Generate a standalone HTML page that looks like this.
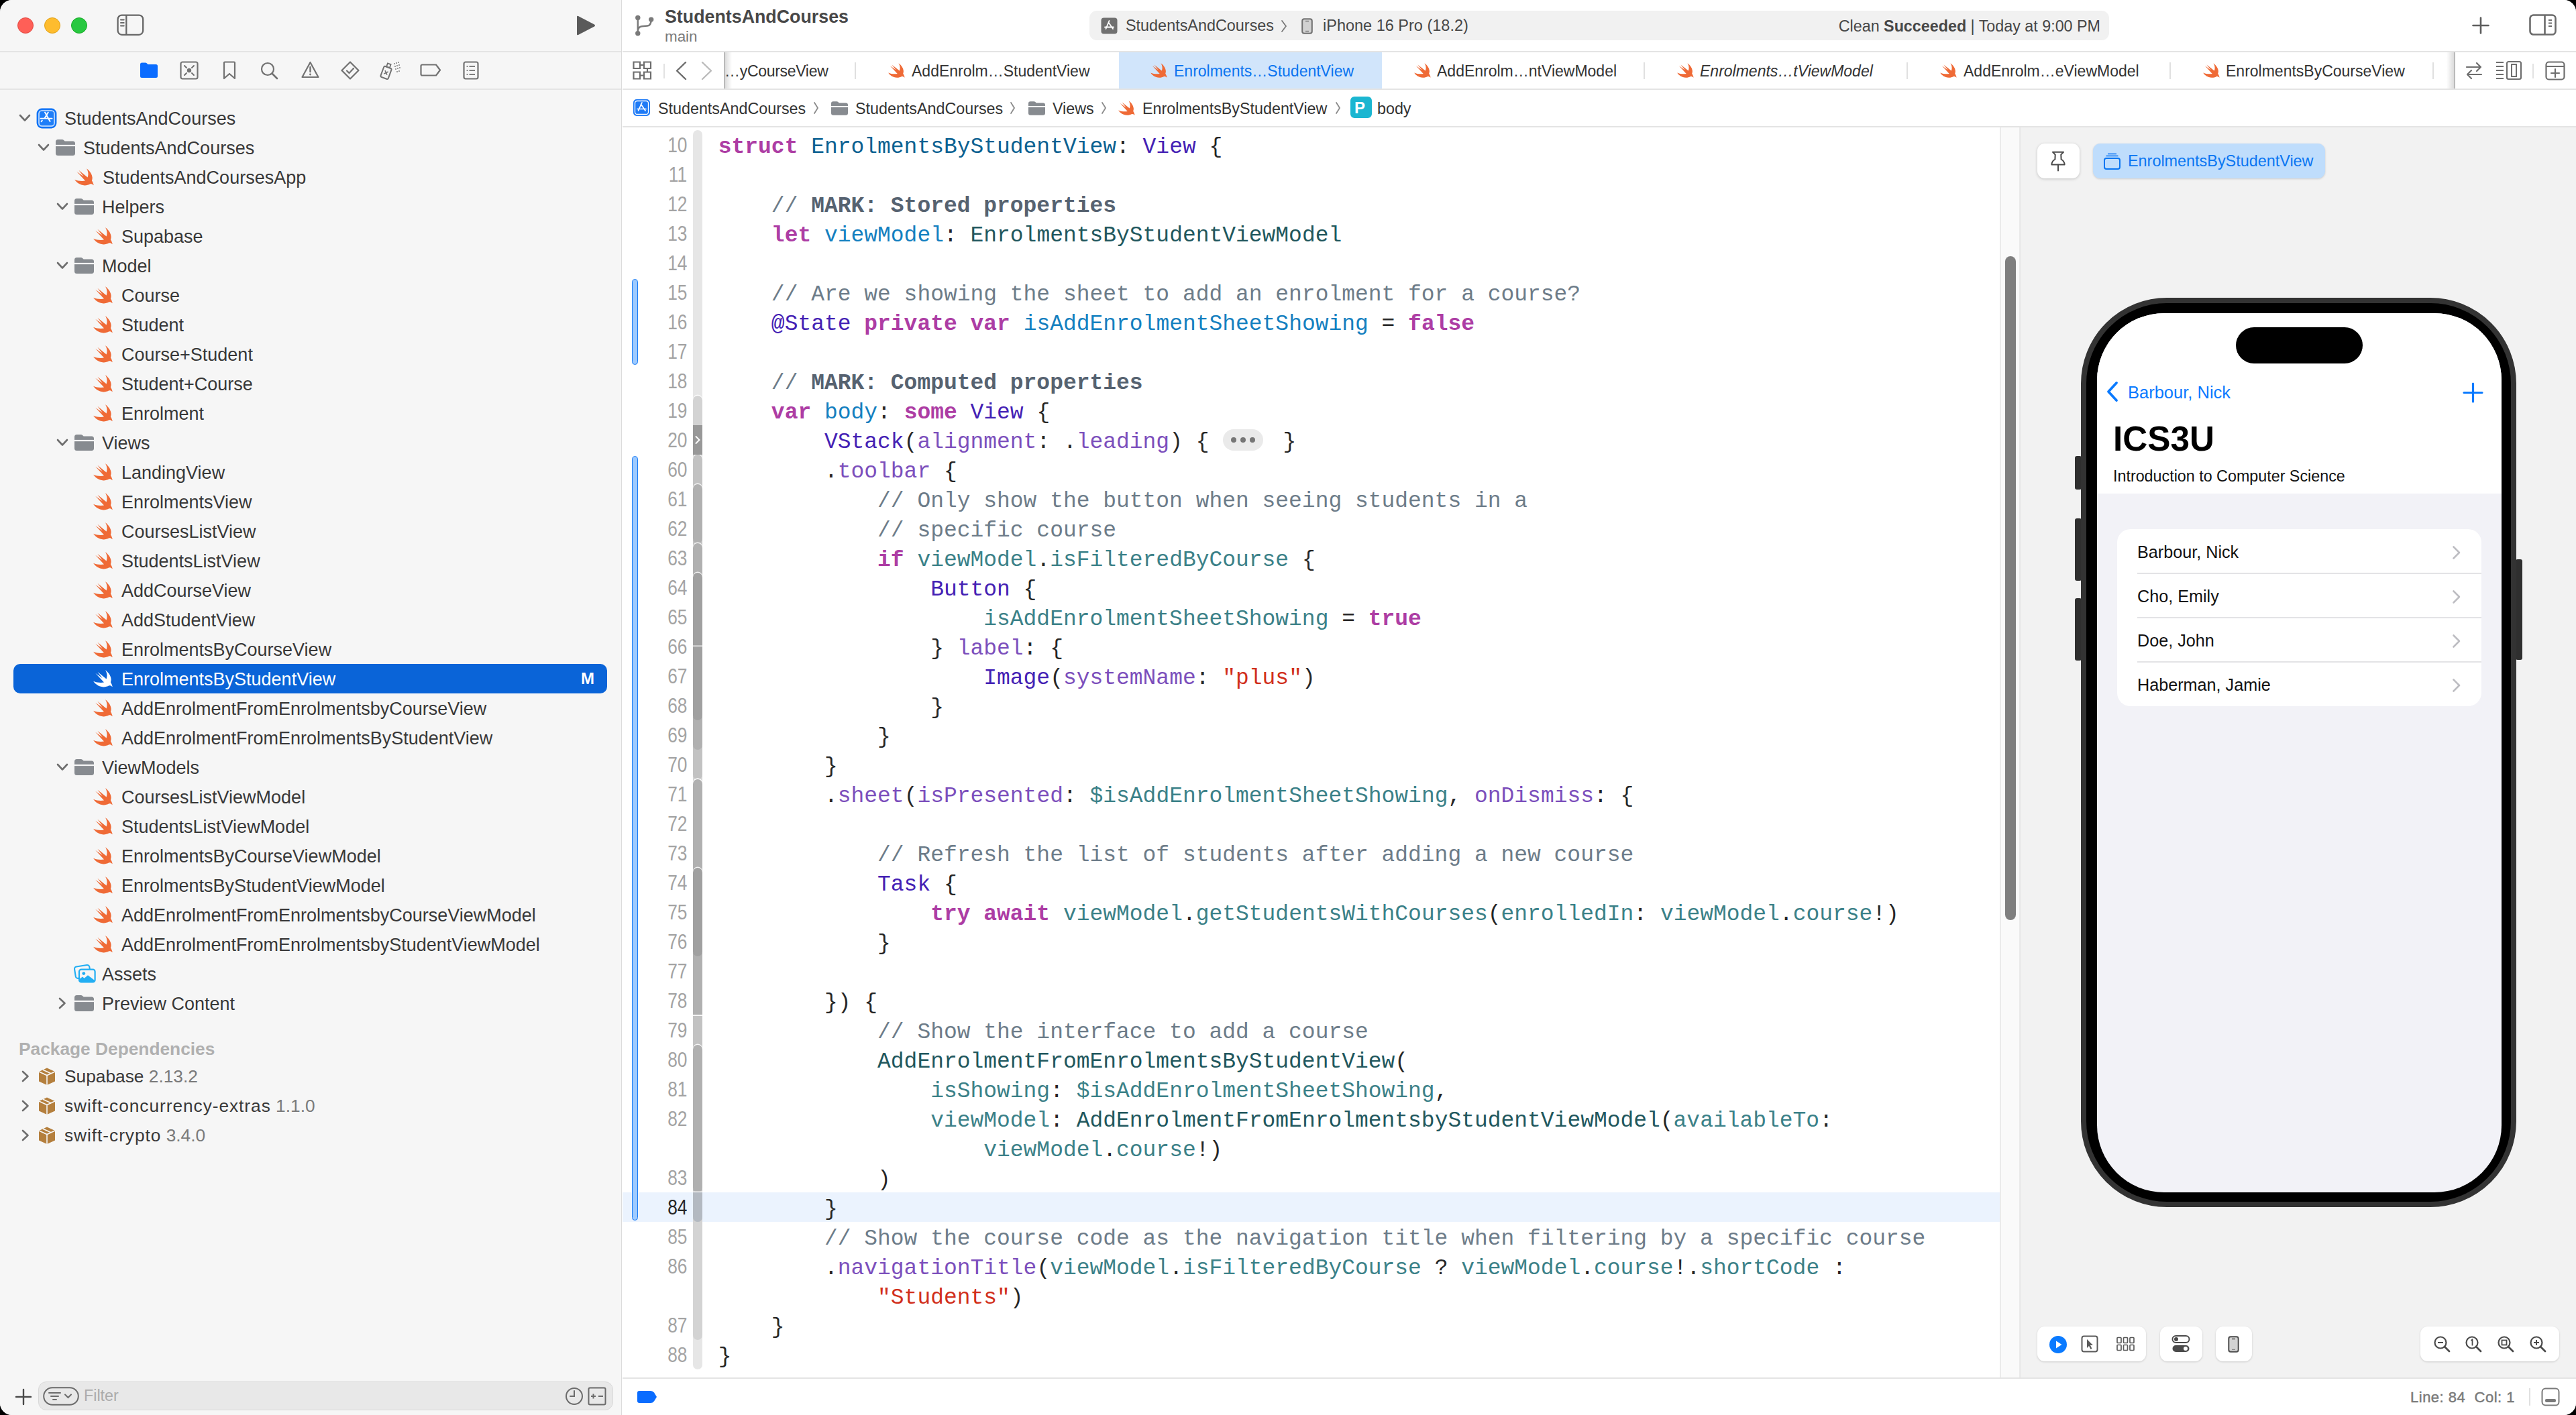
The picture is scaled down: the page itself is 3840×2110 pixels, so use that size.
<!DOCTYPE html><html><head><meta charset="utf-8"><title>Xcode</title><style>
*{margin:0;padding:0;box-sizing:border-box}
html,body{width:3840px;height:2110px;overflow:hidden;background:#000}
body{position:relative;font-family:"Liberation Sans",sans-serif}
#win{position:absolute;left:0;top:0;width:3840px;height:2110px;border-radius:18px;overflow:hidden;background:#fff}
#win div,#win svg{position:absolute}
.t{white-space:pre}
.m{font-family:"Liberation Mono",monospace;font-size:32.96px;line-height:44px;white-space:pre;color:#262626}
.k{color:#AD3DA4;font-weight:700}
.c{color:#6D7C89}
.mk{color:#566270;font-weight:700}
.s{color:#D12F1B}
.td{color:#0B6191}
.od{color:#1480C0}
.pc{color:#21575D}
.pf{color:#3B8188}
.oc{color:#4421B4}
.of{color:#7C4FBC}
</style></head><body><div id="win">
<div style="left:0px;top:0px;width:926px;height:2110px;background:#F6F6F6"></div>
<div style="left:926px;top:0px;width:1px;height:2110px;background:#DCDCDC"></div>
<div style="left:0px;top:76px;width:926px;height:2px;background:#E4E4E4"></div>
<div style="left:0px;top:132px;width:926px;height:2px;background:#E4E4E4"></div>
<div style="left:26px;top:26px;width:24px;height:24px;background:#FF5F57;border:1px solid #E2463F;border-radius:50%"></div>
<div style="left:66px;top:26px;width:24px;height:24px;background:#FEBC2E;border:1px solid #E1A116;border-radius:50%"></div>
<div style="left:106px;top:26px;width:24px;height:24px;background:#28C840;border:1px solid #1AAB29;border-radius:50%"></div>
<svg style="left:173px;top:20px;" width="42" height="34" viewBox="0 0 42 34"><rect x="2.6" y="2.6" width="37.6" height="29.2" rx="6" fill="none" stroke="#676767" stroke-width="2.3"/><line x1="15.3" y1="2" x2="15.3" y2="32" stroke="#676767" stroke-width="2.3"/><line x1="7" y1="9.5" x2="11.7" y2="9.5" stroke="#676767" stroke-width="2" stroke-linecap="round"/><line x1="7" y1="14" x2="11.7" y2="14" stroke="#676767" stroke-width="2" stroke-linecap="round"/><line x1="7" y1="18.5" x2="11.7" y2="18.5" stroke="#676767" stroke-width="2" stroke-linecap="round"/></svg>
<svg style="left:857px;top:22px;" width="32" height="32" viewBox="0 0 32 32"><path d="M3 3 Q3 1 5 2 L29 14.5 Q31 16 29 17.5 L5 30 Q3 31 3 29 Z" fill="#5A5A5A"/></svg>
<svg style="left:208px;top:92px;" width="28" height="25" viewBox="0 0 28 25"><path d="M1 4 Q1 1.5 3.5 1.5 L9 1.5 Q10.5 1.5 11.5 3 L12.5 4 L24.5 4 Q27 4 27 6.5 L27 21.5 Q27 24 24.5 24 L3.5 24 Q1 24 1 21.5 Z" fill="#0A6CFF"/></svg>
<svg style="left:268px;top:91px;" width="28" height="28" viewBox="0 0 28 28"><rect x="1.5" y="1.5" width="25" height="25" rx="2.5" fill="none" stroke="#727272" stroke-width="2.2"/><circle cx="14" cy="14" r="3.2" fill="#727272"/><path d="M7 7 L10 10 M21 7 L18 10 M7 21 L10 18 M21 21 L18 18" stroke="#727272" stroke-width="2" stroke-linecap="round"/></svg>
<svg style="left:332px;top:91px;" width="20" height="28" viewBox="0 0 20 28"><path d="M2 2.5 Q2 1.5 3 1.5 L17 1.5 Q18 1.5 18 2.5 L18 26 L10 19 L2 26 Z" fill="none" stroke="#727272" stroke-width="2.2" stroke-linejoin="round"/></svg>
<svg style="left:388px;top:92px;" width="28" height="27" viewBox="0 0 28 27"><circle cx="11" cy="11" r="9" fill="none" stroke="#727272" stroke-width="2.2"/><line x1="17.5" y1="17.5" x2="25" y2="25" stroke="#727272" stroke-width="2.6" stroke-linecap="round"/></svg>
<svg style="left:449px;top:91px;" width="27" height="26" viewBox="0 0 27 26"><path d="M13.5 2 L25.5 24 L1.5 24 Z" fill="none" stroke="#727272" stroke-width="2.2" stroke-linejoin="round"/><line x1="13.5" y1="9" x2="13.5" y2="16" stroke="#727272" stroke-width="2.4" stroke-linecap="round"/><circle cx="13.5" cy="20" r="1.4" fill="#727272"/></svg>
<svg style="left:508px;top:91px;" width="28" height="28" viewBox="0 0 28 28"><path d="M14 1.5 L26.5 14 L14 26.5 L1.5 14 Z" fill="none" stroke="#727272" stroke-width="2.2" stroke-linejoin="round"/><path d="M9 14.5 L12.5 18 L19 11" fill="none" stroke="#727272" stroke-width="2.2" stroke-linecap="round"/></svg>
<svg style="left:566px;top:91px;" width="33" height="28" viewBox="0 0 33 28"><g transform="rotate(20 10 16)"><rect x="4" y="9" width="12" height="17" rx="2" fill="none" stroke="#727272" stroke-width="2"/><rect x="7.5" y="3.5" width="5" height="5.5" fill="none" stroke="#727272" stroke-width="1.8"/><path d="M7.5 15 L12.5 20 M12.5 15 L7.5 20" stroke="#727272" stroke-width="1.6"/></g><circle cx="22" cy="4" r="0.9" fill="#727272"/><circle cx="25" cy="3" r="0.9" fill="#727272"/><circle cx="28" cy="2" r="0.9" fill="#727272"/><circle cx="23" cy="8" r="0.9" fill="#727272"/><circle cx="26" cy="7" r="0.9" fill="#727272"/><circle cx="29" cy="6" r="0.9" fill="#727272"/><circle cx="24" cy="12" r="0.9" fill="#727272"/><circle cx="27" cy="11" r="0.9" fill="#727272"/><circle cx="30" cy="10" r="0.9" fill="#727272"/><circle cx="26" cy="16" r="0.9" fill="#727272"/><circle cx="29" cy="15" r="0.9" fill="#727272"/></svg>
<svg style="left:626px;top:95px;" width="32" height="19" viewBox="0 0 32 19"><path d="M3.5 1.5 L24 1.5 L30 9.5 L24 17.5 L3.5 17.5 Q1.5 17.5 1.5 15.5 L1.5 3.5 Q1.5 1.5 3.5 1.5 Z" fill="none" stroke="#727272" stroke-width="2.2" stroke-linejoin="round"/></svg>
<svg style="left:690px;top:91px;" width="24" height="28" viewBox="0 0 24 28"><rect x="1.5" y="1.5" width="21" height="25" rx="2.5" fill="none" stroke="#727272" stroke-width="2.2"/><circle cx="6.5" cy="8" r="1.1" fill="#727272"/><line x1="9.5" y1="8" x2="18" y2="8" stroke="#727272" stroke-width="1.8"/><circle cx="6.5" cy="14" r="1.1" fill="#727272"/><line x1="9.5" y1="14" x2="18" y2="14" stroke="#727272" stroke-width="1.8"/><circle cx="6.5" cy="20" r="1.1" fill="#727272"/><line x1="9.5" y1="20" x2="18" y2="20" stroke="#727272" stroke-width="1.8"/></svg>
<svg style="left:28px;top:170px;" width="18" height="12" viewBox="0 0 18 12"><path d="M2 2 L9 9.5 L16 2" fill="none" stroke="#6E6E6E" stroke-width="2.6" stroke-linecap="round" stroke-linejoin="round"/></svg>
<svg style="left:53.5px;top:160.5px;" width="31" height="31" viewBox="0 0 31 31"><rect x="1.4" y="1.4" width="28.2" height="28.2" rx="7" fill="#1F7EF8" stroke="#0A6FF5" stroke-width="1.6"/><rect x="4" y="4" width="23" height="23" rx="4.5" fill="none" stroke="#D6E8FF" stroke-width="1.5"/><path d="M13 6.5 L20.6 20 M17.8 6.5 L12.4 15.6 M6.6 15.6 L23.6 15.6 M8.8 18.6 L7.6 20.3" fill="none" stroke="#FFFFFF" stroke-width="1.9" stroke-linecap="round"/></svg>
<div class="t" style="left:96px;top:158.0px;font-size:27px;line-height:38px;color:#383838;font-weight:400;">StudentsAndCourses</div>
<svg style="left:56px;top:214px;" width="18" height="12" viewBox="0 0 18 12"><path d="M2 2 L9 9.5 L16 2" fill="none" stroke="#6E6E6E" stroke-width="2.6" stroke-linecap="round" stroke-linejoin="round"/></svg>
<svg style="left:83px;top:208px;" width="29" height="24" viewBox="0 0 29 24"><path d="M0 3.5 Q0 0 3.5 0 L9.5 0 Q11 0 12.3 1.2 L13.6 2.6 L25.5 2.6 Q29 2.6 29 6.1 L29 20.5 Q29 24 25.5 24 L3.5 24 Q0 24 0 20.5 Z" fill="#878B90"/><rect x="0" y="7.9" width="29" height="2.2" fill="#F6F6F6"/></svg>
<div class="t" style="left:124px;top:202.0px;font-size:27px;line-height:38px;color:#383838;font-weight:400;">StudentsAndCourses</div>
<svg style="left:111px;top:251px;" width="29.0" height="26.0" viewBox="0 0 29 26"><path d="M18 0.3 C22 3 26 8 26.6 13.4 C26.8 15.5 26.4 17 25.9 18.2 C27.3 20.5 28.3 23 28.7 25.3 C27 23.5 25 23 23.6 23.3 C21 24.8 18 25.5 15.1 25.4 C8 25 3 21 0.1 16.8 C5 19 12 19.5 16 18.5 L3.25 4.7 L13.7 12.3 L6.4 2.8 L19.6 13.4 C21 10 21 5 18 0.3 Z" fill="#EF6A36"/></svg>
<div class="t" style="left:153px;top:246.0px;font-size:27px;line-height:38px;color:#383838;font-weight:400;">StudentsAndCoursesApp</div>
<svg style="left:84px;top:302px;" width="18" height="12" viewBox="0 0 18 12"><path d="M2 2 L9 9.5 L16 2" fill="none" stroke="#6E6E6E" stroke-width="2.6" stroke-linecap="round" stroke-linejoin="round"/></svg>
<svg style="left:111px;top:296px;" width="29" height="24" viewBox="0 0 29 24"><path d="M0 3.5 Q0 0 3.5 0 L9.5 0 Q11 0 12.3 1.2 L13.6 2.6 L25.5 2.6 Q29 2.6 29 6.1 L29 20.5 Q29 24 25.5 24 L3.5 24 Q0 24 0 20.5 Z" fill="#878B90"/><rect x="0" y="7.9" width="29" height="2.2" fill="#F6F6F6"/></svg>
<div class="t" style="left:152px;top:290.0px;font-size:27px;line-height:38px;color:#383838;font-weight:400;">Helpers</div>
<svg style="left:139px;top:339px;" width="29.0" height="26.0" viewBox="0 0 29 26"><path d="M18 0.3 C22 3 26 8 26.6 13.4 C26.8 15.5 26.4 17 25.9 18.2 C27.3 20.5 28.3 23 28.7 25.3 C27 23.5 25 23 23.6 23.3 C21 24.8 18 25.5 15.1 25.4 C8 25 3 21 0.1 16.8 C5 19 12 19.5 16 18.5 L3.25 4.7 L13.7 12.3 L6.4 2.8 L19.6 13.4 C21 10 21 5 18 0.3 Z" fill="#EF6A36"/></svg>
<div class="t" style="left:181px;top:334.0px;font-size:27px;line-height:38px;color:#383838;font-weight:400;">Supabase</div>
<svg style="left:84px;top:390px;" width="18" height="12" viewBox="0 0 18 12"><path d="M2 2 L9 9.5 L16 2" fill="none" stroke="#6E6E6E" stroke-width="2.6" stroke-linecap="round" stroke-linejoin="round"/></svg>
<svg style="left:111px;top:384px;" width="29" height="24" viewBox="0 0 29 24"><path d="M0 3.5 Q0 0 3.5 0 L9.5 0 Q11 0 12.3 1.2 L13.6 2.6 L25.5 2.6 Q29 2.6 29 6.1 L29 20.5 Q29 24 25.5 24 L3.5 24 Q0 24 0 20.5 Z" fill="#878B90"/><rect x="0" y="7.9" width="29" height="2.2" fill="#F6F6F6"/></svg>
<div class="t" style="left:152px;top:378.0px;font-size:27px;line-height:38px;color:#383838;font-weight:400;">Model</div>
<svg style="left:139px;top:427px;" width="29.0" height="26.0" viewBox="0 0 29 26"><path d="M18 0.3 C22 3 26 8 26.6 13.4 C26.8 15.5 26.4 17 25.9 18.2 C27.3 20.5 28.3 23 28.7 25.3 C27 23.5 25 23 23.6 23.3 C21 24.8 18 25.5 15.1 25.4 C8 25 3 21 0.1 16.8 C5 19 12 19.5 16 18.5 L3.25 4.7 L13.7 12.3 L6.4 2.8 L19.6 13.4 C21 10 21 5 18 0.3 Z" fill="#EF6A36"/></svg>
<div class="t" style="left:181px;top:422.0px;font-size:27px;line-height:38px;color:#383838;font-weight:400;">Course</div>
<svg style="left:139px;top:471px;" width="29.0" height="26.0" viewBox="0 0 29 26"><path d="M18 0.3 C22 3 26 8 26.6 13.4 C26.8 15.5 26.4 17 25.9 18.2 C27.3 20.5 28.3 23 28.7 25.3 C27 23.5 25 23 23.6 23.3 C21 24.8 18 25.5 15.1 25.4 C8 25 3 21 0.1 16.8 C5 19 12 19.5 16 18.5 L3.25 4.7 L13.7 12.3 L6.4 2.8 L19.6 13.4 C21 10 21 5 18 0.3 Z" fill="#EF6A36"/></svg>
<div class="t" style="left:181px;top:466.0px;font-size:27px;line-height:38px;color:#383838;font-weight:400;">Student</div>
<svg style="left:139px;top:515px;" width="29.0" height="26.0" viewBox="0 0 29 26"><path d="M18 0.3 C22 3 26 8 26.6 13.4 C26.8 15.5 26.4 17 25.9 18.2 C27.3 20.5 28.3 23 28.7 25.3 C27 23.5 25 23 23.6 23.3 C21 24.8 18 25.5 15.1 25.4 C8 25 3 21 0.1 16.8 C5 19 12 19.5 16 18.5 L3.25 4.7 L13.7 12.3 L6.4 2.8 L19.6 13.4 C21 10 21 5 18 0.3 Z" fill="#EF6A36"/></svg>
<div class="t" style="left:181px;top:510.0px;font-size:27px;line-height:38px;color:#383838;font-weight:400;">Course+Student</div>
<svg style="left:139px;top:559px;" width="29.0" height="26.0" viewBox="0 0 29 26"><path d="M18 0.3 C22 3 26 8 26.6 13.4 C26.8 15.5 26.4 17 25.9 18.2 C27.3 20.5 28.3 23 28.7 25.3 C27 23.5 25 23 23.6 23.3 C21 24.8 18 25.5 15.1 25.4 C8 25 3 21 0.1 16.8 C5 19 12 19.5 16 18.5 L3.25 4.7 L13.7 12.3 L6.4 2.8 L19.6 13.4 C21 10 21 5 18 0.3 Z" fill="#EF6A36"/></svg>
<div class="t" style="left:181px;top:554.0px;font-size:27px;line-height:38px;color:#383838;font-weight:400;">Student+Course</div>
<svg style="left:139px;top:603px;" width="29.0" height="26.0" viewBox="0 0 29 26"><path d="M18 0.3 C22 3 26 8 26.6 13.4 C26.8 15.5 26.4 17 25.9 18.2 C27.3 20.5 28.3 23 28.7 25.3 C27 23.5 25 23 23.6 23.3 C21 24.8 18 25.5 15.1 25.4 C8 25 3 21 0.1 16.8 C5 19 12 19.5 16 18.5 L3.25 4.7 L13.7 12.3 L6.4 2.8 L19.6 13.4 C21 10 21 5 18 0.3 Z" fill="#EF6A36"/></svg>
<div class="t" style="left:181px;top:598.0px;font-size:27px;line-height:38px;color:#383838;font-weight:400;">Enrolment</div>
<svg style="left:84px;top:654px;" width="18" height="12" viewBox="0 0 18 12"><path d="M2 2 L9 9.5 L16 2" fill="none" stroke="#6E6E6E" stroke-width="2.6" stroke-linecap="round" stroke-linejoin="round"/></svg>
<svg style="left:111px;top:648px;" width="29" height="24" viewBox="0 0 29 24"><path d="M0 3.5 Q0 0 3.5 0 L9.5 0 Q11 0 12.3 1.2 L13.6 2.6 L25.5 2.6 Q29 2.6 29 6.1 L29 20.5 Q29 24 25.5 24 L3.5 24 Q0 24 0 20.5 Z" fill="#878B90"/><rect x="0" y="7.9" width="29" height="2.2" fill="#F6F6F6"/></svg>
<div class="t" style="left:152px;top:642.0px;font-size:27px;line-height:38px;color:#383838;font-weight:400;">Views</div>
<svg style="left:139px;top:691px;" width="29.0" height="26.0" viewBox="0 0 29 26"><path d="M18 0.3 C22 3 26 8 26.6 13.4 C26.8 15.5 26.4 17 25.9 18.2 C27.3 20.5 28.3 23 28.7 25.3 C27 23.5 25 23 23.6 23.3 C21 24.8 18 25.5 15.1 25.4 C8 25 3 21 0.1 16.8 C5 19 12 19.5 16 18.5 L3.25 4.7 L13.7 12.3 L6.4 2.8 L19.6 13.4 C21 10 21 5 18 0.3 Z" fill="#EF6A36"/></svg>
<div class="t" style="left:181px;top:686.0px;font-size:27px;line-height:38px;color:#383838;font-weight:400;">LandingView</div>
<svg style="left:139px;top:735px;" width="29.0" height="26.0" viewBox="0 0 29 26"><path d="M18 0.3 C22 3 26 8 26.6 13.4 C26.8 15.5 26.4 17 25.9 18.2 C27.3 20.5 28.3 23 28.7 25.3 C27 23.5 25 23 23.6 23.3 C21 24.8 18 25.5 15.1 25.4 C8 25 3 21 0.1 16.8 C5 19 12 19.5 16 18.5 L3.25 4.7 L13.7 12.3 L6.4 2.8 L19.6 13.4 C21 10 21 5 18 0.3 Z" fill="#EF6A36"/></svg>
<div class="t" style="left:181px;top:730.0px;font-size:27px;line-height:38px;color:#383838;font-weight:400;">EnrolmentsView</div>
<svg style="left:139px;top:779px;" width="29.0" height="26.0" viewBox="0 0 29 26"><path d="M18 0.3 C22 3 26 8 26.6 13.4 C26.8 15.5 26.4 17 25.9 18.2 C27.3 20.5 28.3 23 28.7 25.3 C27 23.5 25 23 23.6 23.3 C21 24.8 18 25.5 15.1 25.4 C8 25 3 21 0.1 16.8 C5 19 12 19.5 16 18.5 L3.25 4.7 L13.7 12.3 L6.4 2.8 L19.6 13.4 C21 10 21 5 18 0.3 Z" fill="#EF6A36"/></svg>
<div class="t" style="left:181px;top:774.0px;font-size:27px;line-height:38px;color:#383838;font-weight:400;">CoursesListView</div>
<svg style="left:139px;top:823px;" width="29.0" height="26.0" viewBox="0 0 29 26"><path d="M18 0.3 C22 3 26 8 26.6 13.4 C26.8 15.5 26.4 17 25.9 18.2 C27.3 20.5 28.3 23 28.7 25.3 C27 23.5 25 23 23.6 23.3 C21 24.8 18 25.5 15.1 25.4 C8 25 3 21 0.1 16.8 C5 19 12 19.5 16 18.5 L3.25 4.7 L13.7 12.3 L6.4 2.8 L19.6 13.4 C21 10 21 5 18 0.3 Z" fill="#EF6A36"/></svg>
<div class="t" style="left:181px;top:818.0px;font-size:27px;line-height:38px;color:#383838;font-weight:400;">StudentsListView</div>
<svg style="left:139px;top:867px;" width="29.0" height="26.0" viewBox="0 0 29 26"><path d="M18 0.3 C22 3 26 8 26.6 13.4 C26.8 15.5 26.4 17 25.9 18.2 C27.3 20.5 28.3 23 28.7 25.3 C27 23.5 25 23 23.6 23.3 C21 24.8 18 25.5 15.1 25.4 C8 25 3 21 0.1 16.8 C5 19 12 19.5 16 18.5 L3.25 4.7 L13.7 12.3 L6.4 2.8 L19.6 13.4 C21 10 21 5 18 0.3 Z" fill="#EF6A36"/></svg>
<div class="t" style="left:181px;top:862.0px;font-size:27px;line-height:38px;color:#383838;font-weight:400;">AddCourseView</div>
<svg style="left:139px;top:911px;" width="29.0" height="26.0" viewBox="0 0 29 26"><path d="M18 0.3 C22 3 26 8 26.6 13.4 C26.8 15.5 26.4 17 25.9 18.2 C27.3 20.5 28.3 23 28.7 25.3 C27 23.5 25 23 23.6 23.3 C21 24.8 18 25.5 15.1 25.4 C8 25 3 21 0.1 16.8 C5 19 12 19.5 16 18.5 L3.25 4.7 L13.7 12.3 L6.4 2.8 L19.6 13.4 C21 10 21 5 18 0.3 Z" fill="#EF6A36"/></svg>
<div class="t" style="left:181px;top:906.0px;font-size:27px;line-height:38px;color:#383838;font-weight:400;">AddStudentView</div>
<svg style="left:139px;top:955px;" width="29.0" height="26.0" viewBox="0 0 29 26"><path d="M18 0.3 C22 3 26 8 26.6 13.4 C26.8 15.5 26.4 17 25.9 18.2 C27.3 20.5 28.3 23 28.7 25.3 C27 23.5 25 23 23.6 23.3 C21 24.8 18 25.5 15.1 25.4 C8 25 3 21 0.1 16.8 C5 19 12 19.5 16 18.5 L3.25 4.7 L13.7 12.3 L6.4 2.8 L19.6 13.4 C21 10 21 5 18 0.3 Z" fill="#EF6A36"/></svg>
<div class="t" style="left:181px;top:950.0px;font-size:27px;line-height:38px;color:#383838;font-weight:400;">EnrolmentsByCourseView</div>
<div style="left:20px;top:990px;width:885px;height:44px;background:#0A64D8;border-radius:10px"></div>
<svg style="left:139px;top:999px;" width="29.0" height="26.0" viewBox="0 0 29 26"><path d="M18 0.3 C22 3 26 8 26.6 13.4 C26.8 15.5 26.4 17 25.9 18.2 C27.3 20.5 28.3 23 28.7 25.3 C27 23.5 25 23 23.6 23.3 C21 24.8 18 25.5 15.1 25.4 C8 25 3 21 0.1 16.8 C5 19 12 19.5 16 18.5 L3.25 4.7 L13.7 12.3 L6.4 2.8 L19.6 13.4 C21 10 21 5 18 0.3 Z" fill="#FFFFFF"/></svg>
<div class="t" style="left:181px;top:994.0px;font-size:27px;line-height:38px;color:#FFFFFF;font-weight:400;">EnrolmentsByStudentView</div>
<div class="t" style="left:866px;top:995.0px;font-size:24px;line-height:34px;color:#FFFFFF;font-weight:700;">M</div>
<svg style="left:139px;top:1043px;" width="29.0" height="26.0" viewBox="0 0 29 26"><path d="M18 0.3 C22 3 26 8 26.6 13.4 C26.8 15.5 26.4 17 25.9 18.2 C27.3 20.5 28.3 23 28.7 25.3 C27 23.5 25 23 23.6 23.3 C21 24.8 18 25.5 15.1 25.4 C8 25 3 21 0.1 16.8 C5 19 12 19.5 16 18.5 L3.25 4.7 L13.7 12.3 L6.4 2.8 L19.6 13.4 C21 10 21 5 18 0.3 Z" fill="#EF6A36"/></svg>
<div class="t" style="left:181px;top:1038.0px;font-size:27px;line-height:38px;color:#383838;font-weight:400;">AddEnrolmentFromEnrolmentsbyCourseView</div>
<svg style="left:139px;top:1087px;" width="29.0" height="26.0" viewBox="0 0 29 26"><path d="M18 0.3 C22 3 26 8 26.6 13.4 C26.8 15.5 26.4 17 25.9 18.2 C27.3 20.5 28.3 23 28.7 25.3 C27 23.5 25 23 23.6 23.3 C21 24.8 18 25.5 15.1 25.4 C8 25 3 21 0.1 16.8 C5 19 12 19.5 16 18.5 L3.25 4.7 L13.7 12.3 L6.4 2.8 L19.6 13.4 C21 10 21 5 18 0.3 Z" fill="#EF6A36"/></svg>
<div class="t" style="left:181px;top:1082.0px;font-size:27px;line-height:38px;color:#383838;font-weight:400;">AddEnrolmentFromEnrolmentsByStudentView</div>
<svg style="left:84px;top:1138px;" width="18" height="12" viewBox="0 0 18 12"><path d="M2 2 L9 9.5 L16 2" fill="none" stroke="#6E6E6E" stroke-width="2.6" stroke-linecap="round" stroke-linejoin="round"/></svg>
<svg style="left:111px;top:1132px;" width="29" height="24" viewBox="0 0 29 24"><path d="M0 3.5 Q0 0 3.5 0 L9.5 0 Q11 0 12.3 1.2 L13.6 2.6 L25.5 2.6 Q29 2.6 29 6.1 L29 20.5 Q29 24 25.5 24 L3.5 24 Q0 24 0 20.5 Z" fill="#878B90"/><rect x="0" y="7.9" width="29" height="2.2" fill="#F6F6F6"/></svg>
<div class="t" style="left:152px;top:1126.0px;font-size:27px;line-height:38px;color:#383838;font-weight:400;">ViewModels</div>
<svg style="left:139px;top:1175px;" width="29.0" height="26.0" viewBox="0 0 29 26"><path d="M18 0.3 C22 3 26 8 26.6 13.4 C26.8 15.5 26.4 17 25.9 18.2 C27.3 20.5 28.3 23 28.7 25.3 C27 23.5 25 23 23.6 23.3 C21 24.8 18 25.5 15.1 25.4 C8 25 3 21 0.1 16.8 C5 19 12 19.5 16 18.5 L3.25 4.7 L13.7 12.3 L6.4 2.8 L19.6 13.4 C21 10 21 5 18 0.3 Z" fill="#EF6A36"/></svg>
<div class="t" style="left:181px;top:1170.0px;font-size:27px;line-height:38px;color:#383838;font-weight:400;">CoursesListViewModel</div>
<svg style="left:139px;top:1219px;" width="29.0" height="26.0" viewBox="0 0 29 26"><path d="M18 0.3 C22 3 26 8 26.6 13.4 C26.8 15.5 26.4 17 25.9 18.2 C27.3 20.5 28.3 23 28.7 25.3 C27 23.5 25 23 23.6 23.3 C21 24.8 18 25.5 15.1 25.4 C8 25 3 21 0.1 16.8 C5 19 12 19.5 16 18.5 L3.25 4.7 L13.7 12.3 L6.4 2.8 L19.6 13.4 C21 10 21 5 18 0.3 Z" fill="#EF6A36"/></svg>
<div class="t" style="left:181px;top:1214.0px;font-size:27px;line-height:38px;color:#383838;font-weight:400;">StudentsListViewModel</div>
<svg style="left:139px;top:1263px;" width="29.0" height="26.0" viewBox="0 0 29 26"><path d="M18 0.3 C22 3 26 8 26.6 13.4 C26.8 15.5 26.4 17 25.9 18.2 C27.3 20.5 28.3 23 28.7 25.3 C27 23.5 25 23 23.6 23.3 C21 24.8 18 25.5 15.1 25.4 C8 25 3 21 0.1 16.8 C5 19 12 19.5 16 18.5 L3.25 4.7 L13.7 12.3 L6.4 2.8 L19.6 13.4 C21 10 21 5 18 0.3 Z" fill="#EF6A36"/></svg>
<div class="t" style="left:181px;top:1258.0px;font-size:27px;line-height:38px;color:#383838;font-weight:400;">EnrolmentsByCourseViewModel</div>
<svg style="left:139px;top:1307px;" width="29.0" height="26.0" viewBox="0 0 29 26"><path d="M18 0.3 C22 3 26 8 26.6 13.4 C26.8 15.5 26.4 17 25.9 18.2 C27.3 20.5 28.3 23 28.7 25.3 C27 23.5 25 23 23.6 23.3 C21 24.8 18 25.5 15.1 25.4 C8 25 3 21 0.1 16.8 C5 19 12 19.5 16 18.5 L3.25 4.7 L13.7 12.3 L6.4 2.8 L19.6 13.4 C21 10 21 5 18 0.3 Z" fill="#EF6A36"/></svg>
<div class="t" style="left:181px;top:1302.0px;font-size:27px;line-height:38px;color:#383838;font-weight:400;">EnrolmentsByStudentViewModel</div>
<svg style="left:139px;top:1351px;" width="29.0" height="26.0" viewBox="0 0 29 26"><path d="M18 0.3 C22 3 26 8 26.6 13.4 C26.8 15.5 26.4 17 25.9 18.2 C27.3 20.5 28.3 23 28.7 25.3 C27 23.5 25 23 23.6 23.3 C21 24.8 18 25.5 15.1 25.4 C8 25 3 21 0.1 16.8 C5 19 12 19.5 16 18.5 L3.25 4.7 L13.7 12.3 L6.4 2.8 L19.6 13.4 C21 10 21 5 18 0.3 Z" fill="#EF6A36"/></svg>
<div class="t" style="left:181px;top:1346.0px;font-size:27px;line-height:38px;color:#383838;font-weight:400;">AddEnrolmentFromEnrolmentsbyCourseViewModel</div>
<svg style="left:139px;top:1395px;" width="29.0" height="26.0" viewBox="0 0 29 26"><path d="M18 0.3 C22 3 26 8 26.6 13.4 C26.8 15.5 26.4 17 25.9 18.2 C27.3 20.5 28.3 23 28.7 25.3 C27 23.5 25 23 23.6 23.3 C21 24.8 18 25.5 15.1 25.4 C8 25 3 21 0.1 16.8 C5 19 12 19.5 16 18.5 L3.25 4.7 L13.7 12.3 L6.4 2.8 L19.6 13.4 C21 10 21 5 18 0.3 Z" fill="#EF6A36"/></svg>
<div class="t" style="left:181px;top:1390.0px;font-size:27px;line-height:38px;color:#383838;font-weight:400;">AddEnrolmentFromEnrolmentsbyStudentViewModel</div>
<svg style="left:110px;top:1437px;" width="34" height="30" viewBox="0 0 34 30"><rect x="1.8" y="3.2" width="22.5" height="17.5" rx="3.2" fill="none" stroke="#22AEF3" stroke-width="2.1" transform="rotate(-9 13 12)"/><rect x="8" y="8.6" width="23.6" height="18.8" rx="3.2" fill="#F6F6F6" stroke="#22AEF3" stroke-width="2.2"/><circle cx="14.8" cy="14.6" r="2.4" fill="#22AEF3"/><path d="M9 27 L9 22.6 L13 19.6 L15.6 21.8 L21 17.2 L30.6 24.4 L30.6 27 Z" fill="#22AEF3"/></svg>
<div class="t" style="left:152px;top:1434.0px;font-size:27px;line-height:38px;color:#383838;font-weight:400;">Assets</div>
<svg style="left:87px;top:1487px;" width="12" height="18" viewBox="0 0 12 18"><path d="M2 2 L9.5 9 L2 16" fill="none" stroke="#6E6E6E" stroke-width="2.6" stroke-linecap="round" stroke-linejoin="round"/></svg>
<svg style="left:111px;top:1484px;" width="29" height="24" viewBox="0 0 29 24"><path d="M0 3.5 Q0 0 3.5 0 L9.5 0 Q11 0 12.3 1.2 L13.6 2.6 L25.5 2.6 Q29 2.6 29 6.1 L29 20.5 Q29 24 25.5 24 L3.5 24 Q0 24 0 20.5 Z" fill="#878B90"/><rect x="0" y="7.9" width="29" height="2.2" fill="#F6F6F6"/></svg>
<div class="t" style="left:152px;top:1478.0px;font-size:27px;line-height:38px;color:#383838;font-weight:400;">Preview Content</div>
<div class="t" style="left:28px;top:1545.5px;font-size:26.3px;line-height:37px;color:#B0B0B0;font-weight:700;">Package Dependencies</div>
<svg style="left:32px;top:1596px;" width="12" height="18" viewBox="0 0 12 18"><path d="M2 2 L9.5 9 L2 16" fill="none" stroke="#6E6E6E" stroke-width="2.6" stroke-linecap="round" stroke-linejoin="round"/></svg>
<svg style="left:56px;top:1591px;" width="28" height="28" viewBox="0 0 28 28"><path d="M14 1.5 L26 7 L26 21.5 L14 27 L2 21.5 L2 7 Z" fill="#B47F3D"/><path d="M2 7 L14 12.5 L26 7 M14 12.5 L14 27" fill="none" stroke="#F6F6F6" stroke-width="1.6"/><path d="M8 4.2 L20 9.8" stroke="#F6F6F6" stroke-width="1.6"/></svg>
<div class="t" style="left:96px;top:1586.5px;font-size:26.3px;line-height:37px;color:#383838;font-weight:400;"><span style="">Supabase</span> <span style="color:#7A7A7A">2.13.2</span></div>
<svg style="left:32px;top:1640px;" width="12" height="18" viewBox="0 0 12 18"><path d="M2 2 L9.5 9 L2 16" fill="none" stroke="#6E6E6E" stroke-width="2.6" stroke-linecap="round" stroke-linejoin="round"/></svg>
<svg style="left:56px;top:1635px;" width="28" height="28" viewBox="0 0 28 28"><path d="M14 1.5 L26 7 L26 21.5 L14 27 L2 21.5 L2 7 Z" fill="#B47F3D"/><path d="M2 7 L14 12.5 L26 7 M14 12.5 L14 27" fill="none" stroke="#F6F6F6" stroke-width="1.6"/><path d="M8 4.2 L20 9.8" stroke="#F6F6F6" stroke-width="1.6"/></svg>
<div class="t" style="left:96px;top:1630.5px;font-size:26.3px;line-height:37px;color:#383838;font-weight:400;"><span style="letter-spacing:0.95px;">swift-concurrency-extras</span> <span style="color:#7A7A7A">1.1.0</span></div>
<svg style="left:32px;top:1684px;" width="12" height="18" viewBox="0 0 12 18"><path d="M2 2 L9.5 9 L2 16" fill="none" stroke="#6E6E6E" stroke-width="2.6" stroke-linecap="round" stroke-linejoin="round"/></svg>
<svg style="left:56px;top:1679px;" width="28" height="28" viewBox="0 0 28 28"><path d="M14 1.5 L26 7 L26 21.5 L14 27 L2 21.5 L2 7 Z" fill="#B47F3D"/><path d="M2 7 L14 12.5 L26 7 M14 12.5 L14 27" fill="none" stroke="#F6F6F6" stroke-width="1.6"/><path d="M8 4.2 L20 9.8" stroke="#F6F6F6" stroke-width="1.6"/></svg>
<div class="t" style="left:96px;top:1674.5px;font-size:26.3px;line-height:37px;color:#383838;font-weight:400;"><span style="letter-spacing:0.95px;">swift-crypto</span> <span style="color:#7A7A7A">3.4.0</span></div>
<svg style="left:22px;top:2070px;" width="26" height="26" viewBox="0 0 26 26"><path d="M13 2 L13 24 M2 13 L24 13" stroke="#4A4A4A" stroke-width="2.4" stroke-linecap="round"/></svg>
<div style="left:57px;top:2060px;width:857px;height:43px;background:#E8E8E8;border:1px solid #D9D9D9;border-radius:12px"></div>
<svg style="left:64px;top:2068px;" width="54" height="28" viewBox="0 0 54 28"><rect x="1.2" y="1.2" width="51.6" height="25.6" rx="12.8" fill="none" stroke="#6B6B6B" stroke-width="2"/><path d="M9 9 L26 9 M12 14 L23 14 M15 19 L20 19" stroke="#6B6B6B" stroke-width="2" stroke-linecap="round"/><path d="M33 11.5 L37.5 16 L42 11.5" fill="none" stroke="#6B6B6B" stroke-width="2" stroke-linecap="round"/></svg>
<div class="t" style="left:125px;top:2064.5px;font-size:23.3px;line-height:33px;color:#ABABAB;font-weight:400;">Filter</div>
<svg style="left:842px;top:2068px;" width="28" height="28" viewBox="0 0 28 28"><circle cx="14" cy="14" r="12" fill="none" stroke="#6B6B6B" stroke-width="2"/><path d="M14 6 L14 14 L8 14" fill="none" stroke="#6B6B6B" stroke-width="2" stroke-linecap="round"/></svg>
<svg style="left:876px;top:2068px;" width="28" height="28" viewBox="0 0 28 28"><rect x="1.5" y="1.5" width="25" height="25" rx="2" fill="none" stroke="#6B6B6B" stroke-width="2"/><path d="M5 14 L12 14 M8.5 10.5 L8.5 17.5 M16 14 L23 14" stroke="#6B6B6B" stroke-width="2"/></svg>
<div style="left:927px;top:0px;width:2913px;height:2110px;background:#FFFFFF"></div>
<div style="left:927.5px;top:76px;width:2912.5px;height:2px;background:#E4E4E4"></div>
<div style="left:927.5px;top:132px;width:2912.5px;height:2px;background:#E4E4E4"></div>
<div style="left:927.5px;top:188px;width:2912.5px;height:2px;background:#E4E4E4"></div>
<svg style="left:930px;top:10px;" width="60" height="50" viewBox="0 0 60 50"><circle cx="20.8" cy="16.5" r="3.7" fill="#7A7A7A"/><circle cx="40.7" cy="19.1" r="3.7" fill="#7A7A7A"/><circle cx="20.8" cy="39.8" r="3.7" fill="#7A7A7A"/><path d="M20.8 16.5 V39.8 M40.7 19.1 Q40.5 28.2 35 28.6 L27 29.2 Q21.2 30 20.8 36" fill="none" stroke="#7A7A7A" stroke-width="2.5"/></svg>
<div class="t" style="left:991px;top:6.0px;font-size:26.8px;line-height:38px;color:#484848;font-weight:700;">StudentsAndCourses</div>
<div class="t" style="left:991px;top:38.5px;font-size:22.4px;line-height:31px;color:#7A7A7A;font-weight:400;">main</div>
<div style="left:1624px;top:16px;width:1520px;height:44px;background:#F1F1F1;border-radius:11px"></div>
<svg style="left:1641px;top:26px;" width="25" height="25" viewBox="0 0 25 25"><rect x="0.5" y="0.5" width="24" height="24" rx="4" fill="#707070"/><path d="M12.5 5 L7.5 17 M11.5 7.5 L18 17 M6 14.5 L19 14.5" stroke="#fff" stroke-width="1.8" stroke-linecap="round"/></svg>
<div class="t" style="left:1678px;top:21.5px;font-size:23.4px;line-height:33px;color:#474747;font-weight:400;">StudentsAndCourses</div>
<svg style="left:1909px;top:29px;" width="10" height="20" viewBox="0 0 10 20"><path d="M2 2 L8 10 L2 18" fill="none" stroke="#7A7A7A" stroke-width="1.8" stroke-linecap="round"/></svg>
<svg style="left:1940px;top:27px;" width="17" height="24" viewBox="0 0 17 24"><rect x="1.2" y="1.2" width="14.6" height="21.6" rx="3" fill="#D2D2D2" stroke="#707070" stroke-width="2"/><line x1="6" y1="4.5" x2="11" y2="4.5" stroke="#707070" stroke-width="1.3"/><line x1="6" y1="19.5" x2="11" y2="19.5" stroke="#707070" stroke-width="1.3"/></svg>
<div class="t" style="left:1972px;top:21.5px;font-size:23.5px;line-height:33px;color:#474747;font-weight:400;">iPhone 16 Pro (18.2)</div>
<div class="t" style="right:709px;top:22.7px;font-size:23.3px;line-height:33px;color:#474747;font-weight:400;text-align:right;">Clean <b>Succeeded</b> | Today at 9:00 PM</div>
<svg style="left:3685px;top:25px;" width="26" height="26" viewBox="0 0 26 26"><path d="M13 1.5 L13 24.5 M1.5 13 L24.5 13" stroke="#5E5E5E" stroke-width="2.6" stroke-linecap="round"/></svg>
<svg style="left:3770px;top:21px;" width="41" height="32" viewBox="0 0 41 32"><rect x="1.5" y="1.5" width="38" height="29" rx="5" fill="none" stroke="#6B6B6B" stroke-width="2.6"/><line x1="23.5" y1="2" x2="23.5" y2="30" stroke="#6B6B6B" stroke-width="2.6"/><path d="M29 9 L34 9 M29 13.5 L34 13.5 M29 18 L34 18" stroke="#6B6B6B" stroke-width="2"/></svg>
<svg style="left:943px;top:91px;" width="30" height="29" viewBox="0 0 30 29"><path d="M1.5 1.5 H11 V11 H1.5 Z M17 1.5 H27 V11 H17 Z M1.5 16.5 H11 V26.5 H1.5 Z M17 16.5 H27 V26.5 H17 Z" fill="none" stroke="#6E6E6E" stroke-width="2.2"/><path d="M11 6 H17 M22 11 V16.5 M11 21.5 H17" stroke="#6E6E6E" stroke-width="2.2"/></svg>
<div style="left:989px;top:95px;width:2px;height:22px;background:#E2E2E2"></div>
<svg style="left:1003px;top:91px;" width="24" height="29" viewBox="0 0 24 29"><path d="M19 2 L6 14.5 L19 27" fill="none" stroke="#6E6E6E" stroke-width="2.4" stroke-linecap="round" stroke-linejoin="round"/></svg>
<svg style="left:1042px;top:91px;" width="24" height="29" viewBox="0 0 24 29"><path d="M5 2 L18 14.5 L5 27" fill="none" stroke="#BBBBBB" stroke-width="2.4" stroke-linecap="round" stroke-linejoin="round"/></svg>
<div style="left:1079.3px;top:78px;width:12px;height:54px;background:linear-gradient(90deg,rgba(0,0,0,0.27) 0,rgba(0,0,0,0.27) 1.5px,rgba(0,0,0,0.14) 1.6px,rgba(0,0,0,0) 12px)"></div>
<div style="left:1668px;top:78px;width:392px;height:54px;background:#D1E5FB"></div>
<div class="t" style="left:1080px;top:90.0px;font-size:23px;line-height:32px;color:#333333;font-weight:400;letter-spacing:-0.3px">…yCourseView</div>
<svg style="left:1324px;top:94px;" width="24.9" height="22.4" viewBox="0 0 29 26"><path d="M18 0.3 C22 3 26 8 26.6 13.4 C26.8 15.5 26.4 17 25.9 18.2 C27.3 20.5 28.3 23 28.7 25.3 C27 23.5 25 23 23.6 23.3 C21 24.8 18 25.5 15.1 25.4 C8 25 3 21 0.1 16.8 C5 19 12 19.5 16 18.5 L3.25 4.7 L13.7 12.3 L6.4 2.8 L19.6 13.4 C21 10 21 5 18 0.3 Z" fill="#EF6A36"/></svg>
<div class="t" style="left:1359px;top:90.0px;font-size:23px;line-height:32px;color:#333333;font-weight:400;">AddEnrolm…StudentView</div>
<svg style="left:1715px;top:94px;" width="24.9" height="22.4" viewBox="0 0 29 26"><path d="M18 0.3 C22 3 26 8 26.6 13.4 C26.8 15.5 26.4 17 25.9 18.2 C27.3 20.5 28.3 23 28.7 25.3 C27 23.5 25 23 23.6 23.3 C21 24.8 18 25.5 15.1 25.4 C8 25 3 21 0.1 16.8 C5 19 12 19.5 16 18.5 L3.25 4.7 L13.7 12.3 L6.4 2.8 L19.6 13.4 C21 10 21 5 18 0.3 Z" fill="#EF6A36"/></svg>
<div class="t" style="left:1750px;top:90.0px;font-size:23px;line-height:32px;color:#0A74F0;font-weight:400;">Enrolments…StudentView</div>
<svg style="left:2108px;top:94px;" width="24.9" height="22.4" viewBox="0 0 29 26"><path d="M18 0.3 C22 3 26 8 26.6 13.4 C26.8 15.5 26.4 17 25.9 18.2 C27.3 20.5 28.3 23 28.7 25.3 C27 23.5 25 23 23.6 23.3 C21 24.8 18 25.5 15.1 25.4 C8 25 3 21 0.1 16.8 C5 19 12 19.5 16 18.5 L3.25 4.7 L13.7 12.3 L6.4 2.8 L19.6 13.4 C21 10 21 5 18 0.3 Z" fill="#EF6A36"/></svg>
<div class="t" style="left:2142px;top:90.0px;font-size:23px;line-height:32px;color:#333333;font-weight:400;">AddEnrolm…ntViewModel</div>
<svg style="left:2500px;top:94px;" width="24.9" height="22.4" viewBox="0 0 29 26"><path d="M18 0.3 C22 3 26 8 26.6 13.4 C26.8 15.5 26.4 17 25.9 18.2 C27.3 20.5 28.3 23 28.7 25.3 C27 23.5 25 23 23.6 23.3 C21 24.8 18 25.5 15.1 25.4 C8 25 3 21 0.1 16.8 C5 19 12 19.5 16 18.5 L3.25 4.7 L13.7 12.3 L6.4 2.8 L19.6 13.4 C21 10 21 5 18 0.3 Z" fill="#EF6A36"/></svg>
<div class="t" style="left:2534px;top:90.0px;font-size:23px;line-height:32px;color:#333333;font-weight:400;font-style:italic;">Enrolments…tViewModel</div>
<svg style="left:2892px;top:94px;" width="24.9" height="22.4" viewBox="0 0 29 26"><path d="M18 0.3 C22 3 26 8 26.6 13.4 C26.8 15.5 26.4 17 25.9 18.2 C27.3 20.5 28.3 23 28.7 25.3 C27 23.5 25 23 23.6 23.3 C21 24.8 18 25.5 15.1 25.4 C8 25 3 21 0.1 16.8 C5 19 12 19.5 16 18.5 L3.25 4.7 L13.7 12.3 L6.4 2.8 L19.6 13.4 C21 10 21 5 18 0.3 Z" fill="#EF6A36"/></svg>
<div class="t" style="left:2927px;top:90.0px;font-size:23px;line-height:32px;color:#333333;font-weight:400;">AddEnrolm…eViewModel</div>
<svg style="left:3284px;top:94px;" width="24.9" height="22.4" viewBox="0 0 29 26"><path d="M18 0.3 C22 3 26 8 26.6 13.4 C26.8 15.5 26.4 17 25.9 18.2 C27.3 20.5 28.3 23 28.7 25.3 C27 23.5 25 23 23.6 23.3 C21 24.8 18 25.5 15.1 25.4 C8 25 3 21 0.1 16.8 C5 19 12 19.5 16 18.5 L3.25 4.7 L13.7 12.3 L6.4 2.8 L19.6 13.4 C21 10 21 5 18 0.3 Z" fill="#EF6A36"/></svg>
<div class="t" style="left:3318px;top:90.0px;font-size:23px;line-height:32px;color:#333333;font-weight:400;">EnrolmentsByCourseView</div>
<div style="left:1274px;top:93px;width:2px;height:25px;background:#E0E0E0"></div>
<div style="left:2450px;top:93px;width:2px;height:25px;background:#E0E0E0"></div>
<div style="left:2842px;top:93px;width:2px;height:25px;background:#E0E0E0"></div>
<div style="left:3234px;top:93px;width:2px;height:25px;background:#E0E0E0"></div>
<div style="left:3626px;top:93px;width:2px;height:25px;background:#E0E0E0"></div>
<div style="left:3647px;top:78px;width:12.5px;height:54px;background:linear-gradient(90deg,rgba(0,0,0,0) 0,rgba(0,0,0,0.14) 11px,rgba(0,0,0,0.27) 11.1px,rgba(0,0,0,0.27) 12.5px)"></div>
<svg style="left:3673px;top:91px;" width="30" height="29" viewBox="0 0 30 29"><path d="M4 9 H25 M19 3 L25 9 L19 15" fill="none" stroke="#6E6E6E" stroke-width="2.2" stroke-linecap="round" stroke-linejoin="round"/><path d="M26 20 H5 M11 14 L5 20 L11 26" fill="none" stroke="#6E6E6E" stroke-width="2.2" stroke-linecap="round" stroke-linejoin="round"/></svg>
<svg style="left:3719px;top:90px;" width="41" height="30" viewBox="0 0 41 30"><path d="M2 3 H13 M2 9 H13 M2 15 H13 M2 21 H13 M2 27 H13" stroke="#6E6E6E" stroke-width="2"/><rect x="18" y="2" width="21" height="26" rx="2.5" fill="none" stroke="#6E6E6E" stroke-width="2.2"/><rect x="25" y="6" width="7" height="18" fill="none" stroke="#6E6E6E" stroke-width="2"/></svg>
<div style="left:3775px;top:95px;width:2px;height:22px;background:#E2E2E2"></div>
<svg style="left:3794px;top:91px;" width="30" height="29" viewBox="0 0 30 29"><rect x="1.5" y="1.5" width="27" height="26" rx="4" fill="none" stroke="#6E6E6E" stroke-width="2.2"/><line x1="1.5" y1="8" x2="28.5" y2="8" stroke="#6E6E6E" stroke-width="2"/><path d="M15 12 V24 M9 18 H21" stroke="#6E6E6E" stroke-width="2.2" stroke-linecap="round"/></svg>
<svg style="left:943px;top:147px;" width="27" height="27" viewBox="0 0 27 27"><rect x="1" y="1" width="25" height="25" rx="5" fill="#1F7BF6"/><rect x="3.5" y="3.5" width="20" height="20" rx="3.5" fill="none" stroke="#fff" stroke-width="1.3"/><path d="M14 6 L8.5 18 M12.5 8.5 L19 18 M7 15.5 L20 15.5" stroke="#fff" stroke-width="1.7" stroke-linecap="round"/></svg>
<div class="t" style="left:981px;top:145.7px;font-size:23.3px;line-height:33px;color:#333333;font-weight:400;">StudentsAndCourses</div>
<svg style="left:1212px;top:151px;" width="9" height="20" viewBox="0 0 9 20"><path d="M2 2 L7 10 L2 18" fill="none" stroke="#8A8A8A" stroke-width="1.8" stroke-linecap="round"/></svg>
<svg style="left:1239px;top:151px;" width="25" height="21" viewBox="0 0 29 24"><path d="M0 3.5 Q0 0 3.5 0 L9.5 0 Q11 0 12.3 1.2 L13.6 2.6 L25.5 2.6 Q29 2.6 29 6.1 L29 20.5 Q29 24 25.5 24 L3.5 24 Q0 24 0 20.5 Z" fill="#878B90"/><rect x="0" y="7.9" width="29" height="2.2" fill="#FFFFFF"/></svg>
<div class="t" style="left:1275px;top:145.7px;font-size:23.3px;line-height:33px;color:#333333;font-weight:400;">StudentsAndCourses</div>
<svg style="left:1505px;top:151px;" width="9" height="20" viewBox="0 0 9 20"><path d="M2 2 L7 10 L2 18" fill="none" stroke="#8A8A8A" stroke-width="1.8" stroke-linecap="round"/></svg>
<svg style="left:1533px;top:151px;" width="25" height="21" viewBox="0 0 29 24"><path d="M0 3.5 Q0 0 3.5 0 L9.5 0 Q11 0 12.3 1.2 L13.6 2.6 L25.5 2.6 Q29 2.6 29 6.1 L29 20.5 Q29 24 25.5 24 L3.5 24 Q0 24 0 20.5 Z" fill="#878B90"/><rect x="0" y="7.9" width="29" height="2.2" fill="#FFFFFF"/></svg>
<div class="t" style="left:1569px;top:145.7px;font-size:23.3px;line-height:33px;color:#333333;font-weight:400;">Views</div>
<svg style="left:1641px;top:151px;" width="9" height="20" viewBox="0 0 9 20"><path d="M2 2 L7 10 L2 18" fill="none" stroke="#8A8A8A" stroke-width="1.8" stroke-linecap="round"/></svg>
<svg style="left:1667px;top:150px;" width="24.9" height="22.4" viewBox="0 0 29 26"><path d="M18 0.3 C22 3 26 8 26.6 13.4 C26.8 15.5 26.4 17 25.9 18.2 C27.3 20.5 28.3 23 28.7 25.3 C27 23.5 25 23 23.6 23.3 C21 24.8 18 25.5 15.1 25.4 C8 25 3 21 0.1 16.8 C5 19 12 19.5 16 18.5 L3.25 4.7 L13.7 12.3 L6.4 2.8 L19.6 13.4 C21 10 21 5 18 0.3 Z" fill="#EF6A36"/></svg>
<div class="t" style="left:1703px;top:145.7px;font-size:23.3px;line-height:33px;color:#333333;font-weight:400;">EnrolmentsByStudentView</div>
<svg style="left:1990px;top:151px;" width="9" height="20" viewBox="0 0 9 20"><path d="M2 2 L7 10 L2 18" fill="none" stroke="#8A8A8A" stroke-width="1.8" stroke-linecap="round"/></svg>
<div style="left:2013px;top:144px;width:32px;height:32px;background:#1BB6D1;border-radius:6px"></div>
<div class="t" style="left:2019px;top:144.0px;font-size:24px;line-height:34px;color:#FFFFFF;font-weight:700;">P</div>
<div class="t" style="left:2053px;top:145.7px;font-size:23.3px;line-height:33px;color:#333333;font-weight:400;">body</div>
<div style="left:927.5px;top:1778px;width:2053.5px;height:44px;background:#EBF3FE"></div>
<div style="left:941.5px;top:416px;width:9px;height:128px;background:#9FCBFF;border:1.5px solid #1A7CF5;border-radius:5px"></div>
<div style="left:941.5px;top:680px;width:9px;height:1140px;background:#9FCBFF;border:1.5px solid #1A7CF5;border-radius:5px"></div>
<div style="left:1033px;top:194px;width:14px;height:1848px;background:#E6E6E6;border-radius:7px 7px 7px 7px"></div>
<div style="left:1033px;top:590px;width:14px;height:1408px;background:#D3D3D3;border-radius:7px 7px 7px 7px;box-shadow:0 -1.5px 0 rgba(255,255,255,0.85)"></div>
<div style="left:1033px;top:678px;width:14px;height:484px;background:#C2C2C2;border-radius:7px 7px 7px 7px;box-shadow:0 -1.5px 0 rgba(255,255,255,0.85)"></div>
<div style="left:1033px;top:722px;width:14px;height:88px;background:#B0B0B0;border-radius:7px 7px 7px 7px;box-shadow:0 -1.5px 0 rgba(255,255,255,0.85)"></div>
<div style="left:1033px;top:810px;width:14px;height:308px;background:#B0B0B0;border-radius:7px 7px 7px 7px;box-shadow:0 -1.5px 0 rgba(255,255,255,0.85)"></div>
<div style="left:1033px;top:854px;width:14px;height:110.0px;background:#A0A0A0;border-radius:7px 7px 0px 0px;box-shadow:0 -1.5px 0 rgba(255,255,255,0.85)"></div>
<div style="left:1033px;top:964.0px;width:14px;height:110.0px;background:#A0A0A0;border-radius:0px 0px 7px 7px;box-shadow:0 -1.5px 0 rgba(255,255,255,0.85)"></div>
<div style="left:1033px;top:1162px;width:14px;height:660px;background:#C2C2C2;border-radius:7px 7px 7px 7px;box-shadow:0 -1.5px 0 rgba(255,255,255,0.85)"></div>
<div style="left:1033px;top:1162px;width:14px;height:352px;background:#B0B0B0;border-radius:7px 7px 0px 0px;box-shadow:0 -1.5px 0 rgba(255,255,255,0.85)"></div>
<div style="left:1033px;top:1294px;width:14px;height:132px;background:#A0A0A0;border-radius:7px 7px 7px 7px;box-shadow:0 -1.5px 0 rgba(255,255,255,0.85)"></div>
<div style="left:1033px;top:1513px;width:14px;height:1.5px;background:rgba(255,255,255,0.85)"></div>
<div style="left:1033px;top:1558px;width:14px;height:220px;background:#B0B0B0;border-radius:7px 7px 7px 7px;box-shadow:0 -1.5px 0 rgba(255,255,255,0.85)"></div>
<div style="left:1033px;top:634px;width:14px;height:44px;background:#989898"></div>
<div style="left:1033px;top:1778px;width:14px;height:44px;background:#B3B9C1;border-radius:0 0 7px 7px;box-shadow:0 -1.5px 0 rgba(255,255,255,0.85)"></div>
<svg style="left:1033px;top:648px;" width="14" height="16" viewBox="0 0 14 16"><path d="M4.5 3 L9.5 8 L4.5 13" fill="none" stroke="#FFFFFF" stroke-width="2" stroke-linecap="round"/></svg>
<div class="t" style="right:2816px;top:194.5px;font-size:31px;line-height:44px;color:#A3A3A3;font-weight:400;text-align:right;transform:scaleX(0.85);transform-origin:right center">10</div>
<div class="m" style="left:1070.75px;top:198px"><span class="k">struct</span> <span class="td">EnrolmentsByStudentView</span>: <span class="oc">View</span> {</div>
<div class="t" style="right:2816px;top:238.5px;font-size:31px;line-height:44px;color:#A3A3A3;font-weight:400;text-align:right;transform:scaleX(0.85);transform-origin:right center">11</div>
<div class="t" style="right:2816px;top:282.5px;font-size:31px;line-height:44px;color:#A3A3A3;font-weight:400;text-align:right;transform:scaleX(0.85);transform-origin:right center">12</div>
<div class="m" style="left:1070.75px;top:286px">    <span class="c">// </span><span class="mk">MARK: Stored properties</span></div>
<div class="t" style="right:2816px;top:326.5px;font-size:31px;line-height:44px;color:#A3A3A3;font-weight:400;text-align:right;transform:scaleX(0.85);transform-origin:right center">13</div>
<div class="m" style="left:1070.75px;top:330px">    <span class="k">let</span> <span class="od">viewModel</span>: <span class="pc">EnrolmentsByStudentViewModel</span></div>
<div class="t" style="right:2816px;top:370.5px;font-size:31px;line-height:44px;color:#A3A3A3;font-weight:400;text-align:right;transform:scaleX(0.85);transform-origin:right center">14</div>
<div class="t" style="right:2816px;top:414.5px;font-size:31px;line-height:44px;color:#A3A3A3;font-weight:400;text-align:right;transform:scaleX(0.85);transform-origin:right center">15</div>
<div class="m" style="left:1070.75px;top:418px">    <span class="c">// Are we showing the sheet to add an enrolment for a course?</span></div>
<div class="t" style="right:2816px;top:458.5px;font-size:31px;line-height:44px;color:#A3A3A3;font-weight:400;text-align:right;transform:scaleX(0.85);transform-origin:right center">16</div>
<div class="m" style="left:1070.75px;top:462px">    <span class="oc">@State</span> <span class="k">private</span> <span class="k">var</span> <span class="od">isAddEnrolmentSheetShowing</span> = <span class="k">false</span></div>
<div class="t" style="right:2816px;top:502.5px;font-size:31px;line-height:44px;color:#A3A3A3;font-weight:400;text-align:right;transform:scaleX(0.85);transform-origin:right center">17</div>
<div class="t" style="right:2816px;top:546.5px;font-size:31px;line-height:44px;color:#A3A3A3;font-weight:400;text-align:right;transform:scaleX(0.85);transform-origin:right center">18</div>
<div class="m" style="left:1070.75px;top:550px">    <span class="c">// </span><span class="mk">MARK: Computed properties</span></div>
<div class="t" style="right:2816px;top:590.5px;font-size:31px;line-height:44px;color:#A3A3A3;font-weight:400;text-align:right;transform:scaleX(0.85);transform-origin:right center">19</div>
<div class="m" style="left:1070.75px;top:594px">    <span class="k">var</span> <span class="od">body</span>: <span class="k">some</span> <span class="oc">View</span> {</div>
<div class="t" style="right:2816px;top:634.5px;font-size:31px;line-height:44px;color:#A3A3A3;font-weight:400;text-align:right;transform:scaleX(0.85);transform-origin:right center">20</div>
<div class="m" style="left:1070.75px;top:638px">        <span class="oc">VStack</span>(<span class="of">alignment</span>: .<span class="of">leading</span>) {<span style="display:inline-block;width:110px"></span>}</div>
<div class="t" style="right:2816px;top:678.5px;font-size:31px;line-height:44px;color:#A3A3A3;font-weight:400;text-align:right;transform:scaleX(0.85);transform-origin:right center">60</div>
<div class="m" style="left:1070.75px;top:682px">        .<span class="of">toolbar</span> {</div>
<div class="t" style="right:2816px;top:722.5px;font-size:31px;line-height:44px;color:#A3A3A3;font-weight:400;text-align:right;transform:scaleX(0.85);transform-origin:right center">61</div>
<div class="m" style="left:1070.75px;top:726px">            <span class="c">// Only show the button when seeing students in a</span></div>
<div class="t" style="right:2816px;top:766.5px;font-size:31px;line-height:44px;color:#A3A3A3;font-weight:400;text-align:right;transform:scaleX(0.85);transform-origin:right center">62</div>
<div class="m" style="left:1070.75px;top:770px">            <span class="c">// specific course</span></div>
<div class="t" style="right:2816px;top:810.5px;font-size:31px;line-height:44px;color:#A3A3A3;font-weight:400;text-align:right;transform:scaleX(0.85);transform-origin:right center">63</div>
<div class="m" style="left:1070.75px;top:814px">            <span class="k">if</span> <span class="pf">viewModel</span>.<span class="pf">isFilteredByCourse</span> {</div>
<div class="t" style="right:2816px;top:854.5px;font-size:31px;line-height:44px;color:#A3A3A3;font-weight:400;text-align:right;transform:scaleX(0.85);transform-origin:right center">64</div>
<div class="m" style="left:1070.75px;top:858px">                <span class="oc">Button</span> {</div>
<div class="t" style="right:2816px;top:898.5px;font-size:31px;line-height:44px;color:#A3A3A3;font-weight:400;text-align:right;transform:scaleX(0.85);transform-origin:right center">65</div>
<div class="m" style="left:1070.75px;top:902px">                    <span class="pf">isAddEnrolmentSheetShowing</span> = <span class="k">true</span></div>
<div class="t" style="right:2816px;top:942.5px;font-size:31px;line-height:44px;color:#A3A3A3;font-weight:400;text-align:right;transform:scaleX(0.85);transform-origin:right center">66</div>
<div class="m" style="left:1070.75px;top:946px">                } <span class="of">label</span>: {</div>
<div class="t" style="right:2816px;top:986.5px;font-size:31px;line-height:44px;color:#A3A3A3;font-weight:400;text-align:right;transform:scaleX(0.85);transform-origin:right center">67</div>
<div class="m" style="left:1070.75px;top:990px">                    <span class="oc">Image</span>(<span class="of">systemName</span>: <span class="s">"plus"</span>)</div>
<div class="t" style="right:2816px;top:1030.5px;font-size:31px;line-height:44px;color:#A3A3A3;font-weight:400;text-align:right;transform:scaleX(0.85);transform-origin:right center">68</div>
<div class="m" style="left:1070.75px;top:1034px">                }</div>
<div class="t" style="right:2816px;top:1074.5px;font-size:31px;line-height:44px;color:#A3A3A3;font-weight:400;text-align:right;transform:scaleX(0.85);transform-origin:right center">69</div>
<div class="m" style="left:1070.75px;top:1078px">            }</div>
<div class="t" style="right:2816px;top:1118.5px;font-size:31px;line-height:44px;color:#A3A3A3;font-weight:400;text-align:right;transform:scaleX(0.85);transform-origin:right center">70</div>
<div class="m" style="left:1070.75px;top:1122px">        }</div>
<div class="t" style="right:2816px;top:1162.5px;font-size:31px;line-height:44px;color:#A3A3A3;font-weight:400;text-align:right;transform:scaleX(0.85);transform-origin:right center">71</div>
<div class="m" style="left:1070.75px;top:1166px">        .<span class="of">sheet</span>(<span class="of">isPresented</span>: <span class="pf">$isAddEnrolmentSheetShowing</span>, <span class="of">onDismiss</span>: {</div>
<div class="t" style="right:2816px;top:1206.5px;font-size:31px;line-height:44px;color:#A3A3A3;font-weight:400;text-align:right;transform:scaleX(0.85);transform-origin:right center">72</div>
<div class="t" style="right:2816px;top:1250.5px;font-size:31px;line-height:44px;color:#A3A3A3;font-weight:400;text-align:right;transform:scaleX(0.85);transform-origin:right center">73</div>
<div class="m" style="left:1070.75px;top:1254px">            <span class="c">// Refresh the list of students after adding a new course</span></div>
<div class="t" style="right:2816px;top:1294.5px;font-size:31px;line-height:44px;color:#A3A3A3;font-weight:400;text-align:right;transform:scaleX(0.85);transform-origin:right center">74</div>
<div class="m" style="left:1070.75px;top:1298px">            <span class="oc">Task</span> {</div>
<div class="t" style="right:2816px;top:1338.5px;font-size:31px;line-height:44px;color:#A3A3A3;font-weight:400;text-align:right;transform:scaleX(0.85);transform-origin:right center">75</div>
<div class="m" style="left:1070.75px;top:1342px">                <span class="k">try</span> <span class="k">await</span> <span class="pf">viewModel</span>.<span class="pf">getStudentsWithCourses</span>(<span class="pf">enrolledIn</span>: <span class="pf">viewModel</span>.<span class="pf">course</span>!)</div>
<div class="t" style="right:2816px;top:1382.5px;font-size:31px;line-height:44px;color:#A3A3A3;font-weight:400;text-align:right;transform:scaleX(0.85);transform-origin:right center">76</div>
<div class="m" style="left:1070.75px;top:1386px">            }</div>
<div class="t" style="right:2816px;top:1426.5px;font-size:31px;line-height:44px;color:#A3A3A3;font-weight:400;text-align:right;transform:scaleX(0.85);transform-origin:right center">77</div>
<div class="t" style="right:2816px;top:1470.5px;font-size:31px;line-height:44px;color:#A3A3A3;font-weight:400;text-align:right;transform:scaleX(0.85);transform-origin:right center">78</div>
<div class="m" style="left:1070.75px;top:1474px">        }) {</div>
<div class="t" style="right:2816px;top:1514.5px;font-size:31px;line-height:44px;color:#A3A3A3;font-weight:400;text-align:right;transform:scaleX(0.85);transform-origin:right center">79</div>
<div class="m" style="left:1070.75px;top:1518px">            <span class="c">// Show the interface to add a course</span></div>
<div class="t" style="right:2816px;top:1558.5px;font-size:31px;line-height:44px;color:#A3A3A3;font-weight:400;text-align:right;transform:scaleX(0.85);transform-origin:right center">80</div>
<div class="m" style="left:1070.75px;top:1562px">            <span class="pc">AddEnrolmentFromEnrolmentsByStudentView</span>(</div>
<div class="t" style="right:2816px;top:1602.5px;font-size:31px;line-height:44px;color:#A3A3A3;font-weight:400;text-align:right;transform:scaleX(0.85);transform-origin:right center">81</div>
<div class="m" style="left:1070.75px;top:1606px">                <span class="pf">isShowing</span>: <span class="pf">$isAddEnrolmentSheetShowing</span>,</div>
<div class="t" style="right:2816px;top:1646.5px;font-size:31px;line-height:44px;color:#A3A3A3;font-weight:400;text-align:right;transform:scaleX(0.85);transform-origin:right center">82</div>
<div class="m" style="left:1070.75px;top:1650px">                <span class="pf">viewModel</span>: <span class="pc">AddEnrolmentFromEnrolmentsbyStudentViewModel</span>(<span class="pf">availableTo</span>:</div>
<div class="m" style="left:1070.75px;top:1694px">                    <span class="pf">viewModel</span>.<span class="pf">course</span>!)</div>
<div class="t" style="right:2816px;top:1734.5px;font-size:31px;line-height:44px;color:#A3A3A3;font-weight:400;text-align:right;transform:scaleX(0.85);transform-origin:right center">83</div>
<div class="m" style="left:1070.75px;top:1738px">            )</div>
<div class="t" style="right:2816px;top:1778.5px;font-size:31px;line-height:44px;color:#262626;font-weight:400;text-align:right;transform:scaleX(0.85);transform-origin:right center">84</div>
<div class="m" style="left:1070.75px;top:1782px">        }</div>
<div class="t" style="right:2816px;top:1822.5px;font-size:31px;line-height:44px;color:#A3A3A3;font-weight:400;text-align:right;transform:scaleX(0.85);transform-origin:right center">85</div>
<div class="m" style="left:1070.75px;top:1826px">        <span class="c">// Show the course code as the navigation title when filtering by a specific course</span></div>
<div class="t" style="right:2816px;top:1866.5px;font-size:31px;line-height:44px;color:#A3A3A3;font-weight:400;text-align:right;transform:scaleX(0.85);transform-origin:right center">86</div>
<div class="m" style="left:1070.75px;top:1870px">        .<span class="of">navigationTitle</span>(<span class="pf">viewModel</span>.<span class="pf">isFilteredByCourse</span> ? <span class="pf">viewModel</span>.<span class="pf">course</span>!.<span class="pf">shortCode</span> :</div>
<div class="m" style="left:1070.75px;top:1914px">            <span class="s">"Students"</span>)</div>
<div class="t" style="right:2816px;top:1954.5px;font-size:31px;line-height:44px;color:#A3A3A3;font-weight:400;text-align:right;transform:scaleX(0.85);transform-origin:right center">87</div>
<div class="m" style="left:1070.75px;top:1958px">    }</div>
<div class="t" style="right:2816px;top:1998.5px;font-size:31px;line-height:44px;color:#A3A3A3;font-weight:400;text-align:right;transform:scaleX(0.85);transform-origin:right center">88</div>
<div class="m" style="left:1070.75px;top:2002px">}</div>
<div style="left:1822.9139999999998px;top:640px;width:60px;height:32px;background:#EAEAEA;border-radius:16px"></div>
<div style="left:1834.9139999999998px;top:652px;width:8px;height:8px;background:#767676;border-radius:50%"></div>
<div style="left:1848.9139999999998px;top:652px;width:8px;height:8px;background:#767676;border-radius:50%"></div>
<div style="left:1862.9139999999998px;top:652px;width:8px;height:8px;background:#767676;border-radius:50%"></div>
<div style="left:2981px;top:190px;width:2px;height:1864px;background:#EBEBEB"></div>
<div style="left:2983px;top:190px;width:27px;height:1864px;background:#FAFAFA"></div>
<div style="left:3010px;top:190px;width:2.5px;height:1864px;background:#EAEAEA"></div>
<div style="left:2989px;top:382px;width:16px;height:990px;background:#7F7F7F;border-radius:8px"></div>
<div style="left:927.5px;top:2054px;width:2912.5px;height:2px;background:#E4E4E4"></div>
<svg style="left:949px;top:2073px;" width="31" height="20" viewBox="0 0 31 20"><path d="M4 1 H21 Q24 1 26 3.5 L30 10 L26 16.5 Q24 19 21 19 H4 Q1 19 1 16 V4 Q1 1 4 1 Z" fill="#0A6CFF"/></svg>
<div style="left:3012.5px;top:190px;width:827.5px;height:1864px;background:#F2F2F2"></div>
<div style="left:3037px;top:214px;width:63px;height:52px;background:#FFFFFF;border-radius:11px;box-shadow:0 1px 4px rgba(0,0,0,0.20)"></div>
<svg style="left:3055px;top:225px;" width="26" height="31" viewBox="0 0 26 31"><path d="M5 1.8 H21 L17.3 5.6 L17.6 12.6 Q22.6 15.2 22.6 20.6 H3.4 Q3.4 15.2 8.4 12.6 L8.7 5.6 Z" fill="none" stroke="#4A4A4A" stroke-width="2" stroke-linejoin="round"/><path d="M13 20.6 V29.5" stroke="#4A4A4A" stroke-width="2" stroke-linecap="round"/></svg>
<div style="left:3120px;top:214px;width:346px;height:52px;background:#BFDDFC;border-radius:11px;box-shadow:0 1px 3px rgba(0,0,0,0.16)"></div>
<svg style="left:3135px;top:227px;" width="27" height="27" viewBox="0 0 27 27"><rect x="2" y="9" width="23" height="16" rx="3" fill="none" stroke="#0A76F2" stroke-width="2"/><path d="M4.5 5.5 H22.5 M7 2.5 H20" stroke="#0A76F2" stroke-width="1.6"/></svg>
<div class="t" style="left:3172px;top:223.5px;font-size:23.4px;line-height:33px;color:#0A76F2;font-weight:400;">EnrolmentsByStudentView</div>
<div style="left:3093px;top:680px;width:10px;height:50px;background:#2F2F2F;border-radius:3px"></div>
<div style="left:3093px;top:773px;width:10px;height:93px;background:#2F2F2F;border-radius:3px"></div>
<div style="left:3093px;top:892px;width:10px;height:93px;background:#2F2F2F;border-radius:3px"></div>
<div style="left:3750px;top:834px;width:10px;height:150px;background:#2F2F2F;border-radius:3px"></div>
<div style="left:3102px;top:444px;width:649px;height:1356px;background:#000;border:8px solid #333333;border-radius:128px"></div>
<div style="left:3126px;top:467px;width:603px;height:1311px;background:#F2F2F7;border-radius:100px;overflow:hidden"></div>
<div style="left:3126px;top:467px;width:603px;height:269px;background:#FFFFFF;border-radius:100px 100px 0 0"></div>
<div style="left:3333px;top:488px;width:189px;height:54px;background:#000;border-radius:27px"></div>
<svg style="left:3137px;top:568px;" width="24" height="32" viewBox="0 0 24 32"><path d="M18 3 L6 16 L18 29" fill="none" stroke="#0A7AFF" stroke-width="3.8" stroke-linecap="round" stroke-linejoin="round"/></svg>
<div class="t" style="left:3172px;top:567.0px;font-size:25.5px;line-height:36px;color:#0A7AFF;font-weight:400;">Barbour, Nick</div>
<svg style="left:3671px;top:570px;" width="31" height="31" viewBox="0 0 31 31"><path d="M15.5 2 V29 M2 15.5 H29" stroke="#0A7AFF" stroke-width="3.2" stroke-linecap="round"/></svg>
<div class="t" style="left:3150px;top:618.5px;font-size:51.3px;line-height:72px;color:#000000;font-weight:700;">ICS3U</div>
<div class="t" style="left:3150px;top:693.5px;font-size:23.3px;line-height:33px;color:#111111;font-weight:400;">Introduction to Computer Science</div>
<div style="left:3156px;top:789px;width:543px;height:264px;background:#FFFFFF;border-radius:20px"></div>
<div class="t" style="left:3186px;top:805.5px;font-size:25.2px;line-height:35px;color:#111111;font-weight:400;">Barbour, Nick</div>
<svg style="left:3654px;top:813px;" width="16" height="22" viewBox="0 0 16 22"><path d="M3.5 2.5 L12 11 L3.5 19.5" fill="none" stroke="#BDBDC2" stroke-width="2.6" stroke-linecap="round" stroke-linejoin="round"/></svg>
<div style="left:3186px;top:854px;width:513px;height:1.5px;background:#E3E3E6"></div>
<div class="t" style="left:3186px;top:871.5px;font-size:25.2px;line-height:35px;color:#111111;font-weight:400;">Cho, Emily</div>
<svg style="left:3654px;top:879px;" width="16" height="22" viewBox="0 0 16 22"><path d="M3.5 2.5 L12 11 L3.5 19.5" fill="none" stroke="#BDBDC2" stroke-width="2.6" stroke-linecap="round" stroke-linejoin="round"/></svg>
<div style="left:3186px;top:920px;width:513px;height:1.5px;background:#E3E3E6"></div>
<div class="t" style="left:3186px;top:937.5px;font-size:25.2px;line-height:35px;color:#111111;font-weight:400;">Doe, John</div>
<svg style="left:3654px;top:945px;" width="16" height="22" viewBox="0 0 16 22"><path d="M3.5 2.5 L12 11 L3.5 19.5" fill="none" stroke="#BDBDC2" stroke-width="2.6" stroke-linecap="round" stroke-linejoin="round"/></svg>
<div style="left:3186px;top:986px;width:513px;height:1.5px;background:#E3E3E6"></div>
<div class="t" style="left:3186px;top:1003.5px;font-size:25.2px;line-height:35px;color:#111111;font-weight:400;">Haberman, Jamie</div>
<svg style="left:3654px;top:1011px;" width="16" height="22" viewBox="0 0 16 22"><path d="M3.5 2.5 L12 11 L3.5 19.5" fill="none" stroke="#BDBDC2" stroke-width="2.6" stroke-linecap="round" stroke-linejoin="round"/></svg>
<div style="left:3037px;top:1978px;width:162px;height:52px;background:#FFFFFF;border-radius:11px;box-shadow:0 1px 3px rgba(0,0,0,0.16)"></div>
<div style="left:3220px;top:1978px;width:63px;height:52px;background:#FFFFFF;border-radius:11px;box-shadow:0 1px 3px rgba(0,0,0,0.16)"></div>
<div style="left:3303px;top:1978px;width:54px;height:52px;background:#FFFFFF;border-radius:11px;box-shadow:0 1px 3px rgba(0,0,0,0.16)"></div>
<div style="left:3608px;top:1978px;width:207px;height:52px;background:#FFFFFF;border-radius:11px;box-shadow:0 1px 3px rgba(0,0,0,0.16)"></div>
<svg style="left:3054px;top:1991px;" width="28" height="28" viewBox="0 0 28 28"><circle cx="14" cy="14" r="13" fill="#0A7AFF"/><path d="M11 8.5 L19.5 14 L11 19.5 Z" fill="#fff"/></svg>
<svg style="left:3102px;top:1991px;" width="26" height="26" viewBox="0 0 26 26"><rect x="1.5" y="1.5" width="23" height="23" rx="3" fill="none" stroke="#5A5A5A" stroke-width="2"/><path d="M9 6 L9 19 L12 16 L14.5 21 L16.5 20 L14 15 L18 15 Z" fill="#5A5A5A"/></svg>
<svg style="left:3155px;top:1993px;" width="27" height="22" viewBox="0 0 27 22"><rect x="1" y="1.5" width="6" height="8" rx="1" fill="none" stroke="#5A5A5A" stroke-width="1.7"/><rect x="1" y="12.5" width="6" height="8" rx="1" fill="none" stroke="#5A5A5A" stroke-width="1.7"/><rect x="10.5" y="1.5" width="6" height="8" rx="1" fill="none" stroke="#5A5A5A" stroke-width="1.7"/><rect x="10.5" y="12.5" width="6" height="8" rx="1" fill="none" stroke="#5A5A5A" stroke-width="1.7"/><rect x="20" y="1.5" width="6" height="8" rx="1" fill="none" stroke="#5A5A5A" stroke-width="1.7"/><rect x="20" y="12.5" width="6" height="8" rx="1" fill="none" stroke="#5A5A5A" stroke-width="1.7"/></svg>
<svg style="left:3237px;top:1990px;" width="28" height="28" viewBox="0 0 28 28"><rect x="1.5" y="2" width="25" height="10" rx="5" fill="none" stroke="#4A4A4A" stroke-width="2"/><circle cx="7" cy="7" r="3" fill="#4A4A4A"/><rect x="1.5" y="16" width="25" height="10" rx="5" fill="#4A4A4A"/><circle cx="21" cy="21" r="3" fill="#fff"/></svg>
<svg style="left:3321px;top:1992px;" width="17" height="25" viewBox="0 0 17 25"><rect x="1.3" y="1.3" width="14.4" height="22.4" rx="3" fill="#D2D2D2" stroke="#4E4E4E" stroke-width="2"/><line x1="6" y1="4.6" x2="11" y2="4.6" stroke="#4E4E4E" stroke-width="1.4"/><line x1="6" y1="20.4" x2="11" y2="20.4" stroke="#8A8A8A" stroke-width="1.2"/></svg>
<svg style="left:3627px;top:1991px;" width="27" height="27" viewBox="0 0 27 27"><circle cx="11" cy="11" r="8.5" fill="none" stroke="#4A4A4A" stroke-width="2.2"/><path d="M17 17 L24 24" stroke="#4A4A4A" stroke-width="2.8" stroke-linecap="round"/><path d="M7 11 H15" stroke="#4A4A4A" stroke-width="2"/></svg>
<svg style="left:3674px;top:1991px;" width="27" height="27" viewBox="0 0 27 27"><circle cx="11" cy="11" r="8.5" fill="none" stroke="#4A4A4A" stroke-width="2.2"/><path d="M17 17 L24 24" stroke="#4A4A4A" stroke-width="2.8" stroke-linecap="round"/><path d="M9.5 8 L11.5 6.5 V15.5" fill="none" stroke="#4A4A4A" stroke-width="1.8"/></svg>
<svg style="left:3722px;top:1991px;" width="27" height="27" viewBox="0 0 27 27"><circle cx="11" cy="11" r="8.5" fill="none" stroke="#4A4A4A" stroke-width="2.2"/><path d="M17 17 L24 24" stroke="#4A4A4A" stroke-width="2.8" stroke-linecap="round"/><rect x="7.5" y="7.5" width="7" height="7" fill="none" stroke="#4A4A4A" stroke-width="1.8"/></svg>
<svg style="left:3770px;top:1991px;" width="27" height="27" viewBox="0 0 27 27"><circle cx="11" cy="11" r="8.5" fill="none" stroke="#4A4A4A" stroke-width="2.2"/><path d="M17 17 L24 24" stroke="#4A4A4A" stroke-width="2.8" stroke-linecap="round"/><path d="M7 11 H15 M11 7 V15" stroke="#4A4A4A" stroke-width="2"/></svg>
<div class="t" style="right:91px;top:2067.5px;font-size:22px;line-height:31px;color:#7A7A7A;font-weight:400;text-align:right;-webkit-text-stroke:0.45px #7A7A7A;letter-spacing:0.5px">Line: 84  Col: 1</div>
<div style="left:3770px;top:2070px;width:2px;height:26px;background:#E0E0E0"></div>
<svg style="left:3788px;top:2069px;" width="28" height="28" viewBox="0 0 28 28"><rect x="1.5" y="1.5" width="25" height="25" rx="5" fill="none" stroke="#7A7A7A" stroke-width="2"/><rect x="6" y="17" width="16" height="5" rx="2" fill="#7A7A7A"/></svg>
</div></body></html>
